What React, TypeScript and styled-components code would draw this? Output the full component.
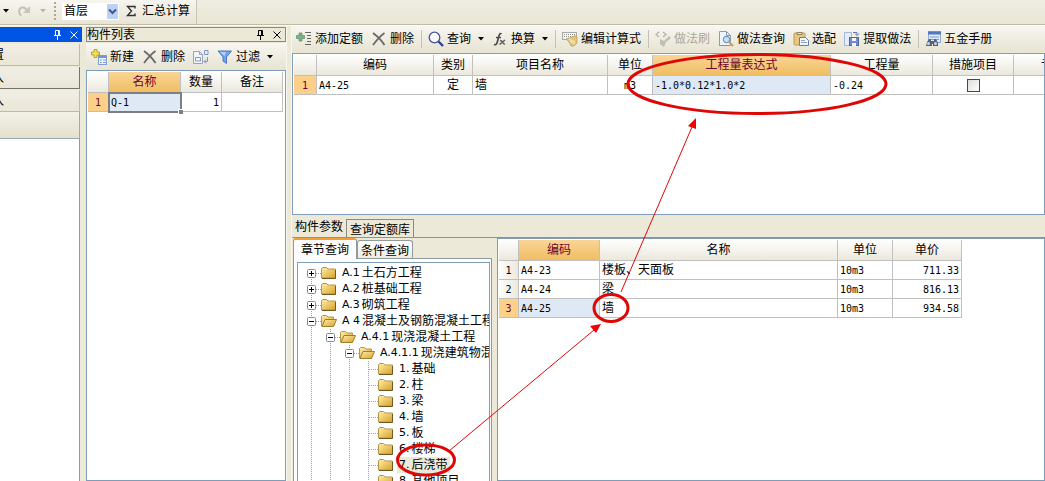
import React from "react";
import styled, { createGlobalStyle, css } from "styled-components";

const GlobalStyle = createGlobalStyle`
  * { box-sizing: border-box; }
  html, body, #root { height: 100%; margin: 0; }
  body {
    overflow: hidden;
    background: #ece9d8;
    color: #000;
    font: 12px/16px "Liberation Sans", "Noto Sans CJK SC", sans-serif;
  }
  button, select, input { font: inherit; color: inherit; margin: 0; }
  svg { flex: none; }
`;

const Window = styled.div`
  position: relative;
  display: flex;
  flex-direction: column;
  height: 100vh;
  overflow: hidden;
`;

const TopBar = styled.header`
  flex: none;
  height: 25px;
  display: flex;
  background: linear-gradient(#efede2, #e9e6d5);
  border-bottom: 1px solid #bfbba8;
`;

const TopTools = styled.div`
  width: 197px;
  display: flex;
  align-items: center;
  padding: 0 6px 2px 3px;
  border-right: 1px solid #c9c6b8;
  background: linear-gradient(#f6f5ef, #e8e5d5);
`;

const TopIcons = styled.div`
  display: flex;
  align-items: center;
  gap: 9px;
`;

const Grip = styled.span`
  width: 2px;
  height: 18px;
  margin: 0 6px 0 8px;
  background: repeating-linear-gradient(#aaa79a 0 2px, transparent 2px 4px);
`;

const IconButton = styled.button`
  display: flex;
  align-items: center;
  padding: 0;
  border: 0;
  background: none;
`;

const FloorPicker = styled.label`
  position: relative;
  width: 57px;
  height: 17px;
  margin-right: 7px;
  display: flex;
  background: #fff;
  select {
    width: 100%;
    height: 17px;
    padding: 0 14px 0 2px;
    border: 0;
    appearance: none;
    background: none;
    line-height: 16px;
  }
  svg { position: absolute; right: 1px; top: 1px; pointer-events: none; }
`;

const Sum = styled.button`
  display: flex;
  align-items: center;
  gap: 6px;
  padding: 0;
  border: 0;
  background: none;
  white-space: nowrap;
`;

const Workspace = styled.div`
  flex: 1;
  min-height: 0;
  display: flex;
  border-top: 1px solid #fbfaf3;
`;

const NavPane = styled.aside`
  flex: none;
  width: 82px;
  padding-top: 1px;
  display: flex;
  flex-direction: column;
`;

const TitleBar = styled.div<{ $active?: boolean }>`
  flex: none;
  height: 15px;
  display: flex;
  align-items: center;
  justify-content: flex-end;
  gap: 8px;
  padding-right: 4px;
  line-height: 14px;
  ${(p) =>
    p.$active
      ? css`background: #0054e3; color: #fff; margin-bottom: 1px;`
      : css`border: 1px solid #8c8a7e; color: #000;`}
  h2 { flex: 1; margin: 0; font-size: 12px; font-weight: 400; }
`;

const NavButton = styled.button<{ $pressed?: boolean }>`
  flex: none;
  height: 22px;
  width: 80px;
  margin-top: 1px;
  padding: 1px 75px 0 0;
  display: flex;
  justify-content: flex-end;
  align-items: center;
  overflow: hidden;
  white-space: nowrap;
  background: linear-gradient(#f1efe5, #e9e6d6);
  border: 0;
  border-right: 1px solid ${(p) => (p.$pressed ? "#77756b" : "#bdbaab")};
  border-bottom: 1px solid ${(p) => (p.$pressed ? "#77756b" : "#bdbaab")};
`;

const NavStrip = styled.div`
  flex: none;
  height: 27px;
  width: 80px;
  background: linear-gradient(#f4f2e8, #e4e0cc);
  border-right: 1px solid #aca899;
  border-bottom: 1px solid #9aa7ae;
`;

const NavBody = styled.div`
  flex: 1;
  width: 80px;
  background: #fff;
  border-right: 1px solid #7f9db9;
`;

const ListPane = styled.section`
  flex: none;
  width: 201px;
  margin: 0 4px;
  padding-top: 1px;
  display: flex;
  flex-direction: column;
  border-right: 1px solid #f8f7f0;
`;

const Toolbar = styled.div<{ $inset?: boolean }>`
  flex: none;
  height: ${(p) => (p.$inset ? "27px" : "26px")};
  margin: ${(p) => (p.$inset ? "1px 0 0" : "0 0 1px")};
  padding-left: ${(p) => (p.$inset ? "1px" : "0")};
  display: flex;
  align-items: center;
  overflow: hidden;
  background: linear-gradient(#f7f6f0, #e7e4d3);
`;

const ToolButton = styled.button`
  flex: none;
  display: flex;
  align-items: center;
  gap: 3px;
  padding: 0 4px;
  border: 0;
  background: none;
  white-space: nowrap;
  &:disabled { color: #aca899; }
`;

const Divider = styled.span`
  flex: none;
  width: 1px;
  height: 18px;
  margin: 0 2px 0 3px;
  background: #c5c2b4;
`;

const ArrowSlot = styled.span`
  display: flex;
  padding-left: 4px;
`;

const GridFrame = styled.div`
  flex: 1;
  min-width: 0;
  overflow: hidden;
  background: #fff;
  border: 1px solid #7f9db9;
  padding: 1px 0 0 1px;
`;

const Grid = styled.table`
  table-layout: fixed;
  width: 0;
  border-collapse: separate;
  border-spacing: 0;
`;

const HeadCell = styled.th<{ $on?: boolean }>`
  height: 21px;
  padding: 0;
  overflow: hidden;
  white-space: nowrap;
  font-weight: 400;
  text-align: center;
  line-height: 16px;
  border-right: 1px solid #c0c0c0;
  border-bottom: 1px solid #c0c0c0;
  color: ${(p) => (p.$on ? "#700030" : "#000")};
  background: ${(p) =>
    p.$on ? "linear-gradient(#f9d596, #f0be62)" : "linear-gradient(#fefefd, #ebe8dc)"};
`;

const Cell = styled.td<{ $align?: string; $fill?: boolean; $focus?: boolean }>`
  position: relative;
  height: 19px;
  padding: 0 2px;
  overflow: ${(p) => (p.$focus ? "visible" : "hidden")};
  white-space: nowrap;
  text-align: ${(p) => p.$align || "left"};
  line-height: 16px;
  border-right: 1px solid #c0c0c0;
  border-bottom: 1px solid #c0c0c0;
  background: ${(p) => (p.$fill ? "#dfe8f5" : "#fff")};
  ${(p) => p.$focus && css`z-index: 1; outline: 2px solid #7b7f84; outline-offset: -1px;`}
`;

const RowHead = styled(Cell).attrs({ as: "th" })<{ $on?: boolean }>`
  text-align: center;
  font-weight: 400;
  color: ${(p) => (p.$on ? "#700030" : "#000")};
  background: ${(p) => (p.$on ? "#fdd08a" : "linear-gradient(90deg, #fdfdfb, #ece9dd)")};
`;

const Mono = styled.span`
  font: 10px/16px "DejaVu Sans Mono", monospace;
`;

const FillHandle = styled.span`
  position: absolute;
  right: -3px;
  bottom: -3px;
  width: 5px;
  height: 5px;
  background: #7b7f84;
  border: 1px solid #fff;
  border-width: 1px 0 0 1px;
`;

const Check = styled.input`
  appearance: none;
  display: block;
  width: 13px;
  height: 13px;
  margin: 0 auto !important;
  border: 1px solid #1c5180;
  background: linear-gradient(135deg, #dcdcd7, #fff);
`;

const Main = styled.main`
  flex: 1;
  min-width: 0;
  display: flex;
  flex-direction: column;
  border-left: 1px solid #f8f7f0;
`;

const Upper = styled.div`
  flex: 0 0 35%;
  min-height: 162px;
  display: flex;
`;

const OuterTabs = styled.div`
  flex: none;
  display: flex;
  align-items: flex-end;
  height: 23px;
  border-bottom: 1px solid #8a949c;
`;

const OuterTab = styled.button<{ $on?: boolean }>`
  height: ${(p) => (p.$on ? "22px" : "18px")};
  padding: 2px 3px 0;
  white-space: nowrap;
  background: none;
  border: 1px solid #8c8a7e;
  border-width: ${(p) => (p.$on ? "0" : "1px 1px 0")};
`;

const Lower = styled.div`
  flex: 1;
  min-height: 0;
  display: flex;
  gap: 5px;
`;

const QueryPane = styled.div`
  flex: none;
  width: 200px;
  padding-left: 1px;
  display: flex;
  flex-direction: column;
`;

const InnerTabs = styled.div`
  flex: none;
  height: 20px;
  display: flex;
  align-items: flex-end;
`;

const InnerTab = styled.button<{ $on?: boolean }>`
  position: relative;
  white-space: nowrap;
  border: 1px solid #919b9c;
  border-bottom: 0;
  border-radius: 3px 3px 0 0;
  ${(p) =>
    p.$on
      ? css`
          height: 21px;
          width: 64px;
          padding: 0;
          margin-bottom: -1px;
          z-index: 1;
          background: #fcfcfe;
          border-top: 2px solid #f0a030;
        `
      : css`
          height: 18px;
          width: 56px;
          padding: 2px 0 0;
          background: linear-gradient(#fff, #ecebe5);
        `}
`;

const TabPage = styled.div`
  flex: 1;
  min-height: 0;
  display: flex;
  padding: 3px 1px 0 3px;
  background: #fcfcfe;
  border: 1px solid #919b9c;
  border-bottom: 0;
`;

const Tree = styled.ul`
  flex: 1;
  min-width: 0;
  margin: 0;
  padding: 2px 0 0 4px;
  list-style: none;
  overflow: hidden;
  background: #fff;
  border: 1px solid #7f9db9;
  border-bottom: 0;
`;

const TreeRow = styled.li`
  display: flex;
  align-items: center;
  height: 16px;
  white-space: nowrap;
`;

const TreeLabel = styled.span<{ $on?: boolean }>`
  display: flex;
  height: 16px;
  padding: 0 2px;
  margin-left: 3px;
  background: ${(p) => (p.$on ? "#ece9d8" : "none")};
`;

const TreeCode = styled.span`
  font: 11px/16px "DejaVu Sans", sans-serif;
  white-space: pre;
  margin-right: 2px;
`;

const Marks = styled.svg`
  position: absolute;
  left: 0;
  top: 0;
  z-index: 2;
  pointer-events: none;
`;

const Svg = ({ children, w = 16, h = 16 }: { children: React.ReactNode; w?: number; h?: number }) => (
  <svg width={w} height={h} viewBox={`0 0 ${w} ${h}`} fill="none" aria-hidden="true">
    {children}
  </svg>
);

const Down = ({ color = "#000" }: { color?: string }) => (
  <Svg w={6} h={4}><path d="M0 0h6L3 3.5z" fill={color} /></Svg>
);
const Pin = () => (
  <Svg w={9} h={10}>
    <path d="M2.5 5V.5h4V5M5.5 1v4M1 5.5h7M4.5 6v4" stroke="currentColor" />
  </Svg>
);
const Close = () => (
  <Svg w={8} h={8}><path d="M.5.5l7 7M7.5.5l-7 7" stroke="currentColor" /></Svg>
);
const Redo = () => (
  <Svg w={13} h={14}>
    <path d="M3 12C0 8 1 4 4 3.500 7 3 8 5 8 6.500" stroke="#c4c2b7" strokeWidth="2" />
    <path d="M12 2v7H5z" fill="#c8c6bb" />
  </Svg>
);
const Chevron = () => (
  <Svg w={11} h={15}>
    <rect width="11" height="15" rx="1" fill="#bdd0f6" />
    <path d="M2 5.500l3.500 3.500L9 5.500" stroke="#435a86" strokeWidth="2" />
  </Svg>
);
const SumIcon = () => (
  <Svg w={10} h={12}>
    <path d="M9 3.500V1.500H1.500L5.500 6 1.500 10.500H9V8.500" stroke="#303030" strokeWidth="1.400" />
  </Svg>
);
const NewIcon = () => (
  <Svg>
    <path d="M3 .5h3V3h2.500v3H6v2.500H3V6H.5V3H3z" fill="#f3df55" stroke="#a2923a" strokeWidth=".8" />
    <rect x="7.500" y="6.500" width="8" height="9" fill="#eef5ff" stroke="#819dce" />
    <path d="M8 8h7" stroke="#6f94da" strokeWidth="2" />
    <path d="M9 11h2m1 0h3M9 13.500h2m1 0h3" stroke="#7c9bc9" />
  </Svg>
);
const DeleteIcon = () => (
  <Svg>
    <path d="M2 2C6 5 11 10 13.500 14M13.500 2C9 5 5 10 2 14" stroke="#686868" strokeWidth="1.800" />
  </Svg>
);
const CopyIcon = () => (
  <Svg>
    <path d="M.5 2.500h6l3 3v9h-9z" fill="#f1f4fa" stroke="#97a3b8" />
    <path d="M2.500 8.500h5v3.500h-5z" stroke="#8b9cbc" />
    <path d="M6.500 2.500v3h3" stroke="#97a3b8" />
    <path d="M11.500 1.500h3.500v4h-3.500zM14.500 8v4.500h-3M13 10.500l-2 2 2 2" stroke="#7797ce" />
  </Svg>
);
const FilterIcon = () => (
  <Svg>
    <path d="M1 2h13.500L9.500 8v6.500L6 12V8z" fill="#72a2e8" stroke="#4d77c9" />
    <path d="M3 3h6L7.500 7z" fill="#b3d1fa" />
  </Svg>
);
const AddIcon = () => (
  <Svg>
    <path d="M3 2h3v2.500h2.500v3H6V10H3V7.500H.5v-3H3z" fill="#7db088" stroke="#5b8f6d" strokeWidth=".7" />
    <path d="M9 1.500h6M11 4.500h4M11 7.500h4M11 10.500h4M9 13.500h6" stroke="#676767" />
  </Svg>
);
const SearchIcon = () => (
  <Svg>
    <circle cx="6.500" cy="6.500" r="5.300" fill="#f5f8ff" stroke="#4b5296" strokeWidth="1.300" />
    <path d="M10.500 10.500l4.500 4.500" stroke="#343f91" strokeWidth="2.400" />
  </Svg>
);
const FxIcon = () => (
  <Svg>
    <path d="M9.500 3C7.500 1.500 7 4.500 6 8.500S4.500 14.500 2 13.500M4 6.500h5" stroke="#4d4d4d" strokeWidth="1.700" />
    <path d="M8 9.500c3-.5 2 4 5 3.500M13 9L7.500 13.500" stroke="#5d5d5d" strokeWidth="1.500" />
  </Svg>
);
const EditCalcIcon = () => (
  <Svg>
    <rect x=".5" y="1.500" width="14" height="7" fill="#f5f5f3" stroke="#a9aaa8" />
    <path d="M2 3.500h11M2 5.500h11" stroke="#8e9391" strokeDasharray="1 1" />
    <path d="M4 8l5-1.500 4-2 2 1.500v6l-3 3H9L7 11z" fill="#e2c57c" stroke="#b39a5c" strokeWidth=".7" />
    <path d="M8 10l5 3M7 8l6 3" stroke="#fff0c0" />
  </Svg>
);
const BrushIcon = () => (
  <Svg>
    <path d="M4 1L1 3.500 4 6M8 1l3 2.500L8 6" stroke="#b4b3aa" strokeWidth="1.300" />
    <path d="M5 8l4 2 5-5 2 2-5 4-2 5-4-3z" fill="#c0beb4" />
  </Svg>
);
const DocSearchIcon = () => (
  <Svg>
    <path d="M1.500.5h7l4 4v10h-11z" fill="#edf4fc" stroke="#83a1c5" />
    <path d="M8.500.5v4h4M1 14.500h11" stroke="#7896bd" />
    <circle cx="8.500" cy="8.500" r="3.200" fill="#c7e2f5" stroke="#627f9d" />
    <path d="M11 11l4 4" stroke="#d39859" strokeWidth="2" />
  </Svg>
);
const PasteIcon = () => (
  <Svg>
    <rect x="1" y="2" width="11" height="12" rx="1" fill="#e8c97a" stroke="#b79b5c" />
    <path d="M4 3.500V1.500h5v2z" fill="#f1e9c8" stroke="#8d8163" />
    <path d="M6.500 6.500h6l3 3v5h-9z" fill="#f1f6fc" stroke="#6a7f9e" />
    <path d="M8 9.500h4M8 11.500h6" stroke="#8aa4c5" />
  </Svg>
);
const ExtractIcon = () => (
  <Svg>
    <path d="M.5 1.500h7v13h-7z" fill="#e5edfb" stroke="#a3b6db" />
    <rect x="5.500" y="6.500" width="9" height="8" fill="#718bc9" stroke="#5166a4" />
    <path d="M8 7h4v3H8zM8 12h4v3H8z" fill="#f4f6fd" />
    <path d="M9 1.500h4v3M11 2.500L13 4.500 15 2.500" stroke="#687bad" />
  </Svg>
);
const ManualIcon = () => (
  <Svg>
    <rect x="3.500" y=".5" width="12" height="11" fill="#dceafe" stroke="#8cabd7" />
    <path d="M3 2h13" stroke="#5279be" strokeWidth="3" />
    <path d="M5 6h9M5 8.500h9" stroke="#7d9fcf" />
    <path d="M2 11l2-3h2v2h3V8h2l2 4v3H8v-2H7v2H1z" fill="#556579" />
    <circle cx="3.500" cy="12.500" r="1.500" fill="#c4dbe7" />
    <circle cx="10.500" cy="12.500" r="1.500" fill="#c4dbe7" />
  </Svg>
);
const Folder = ({ open }: { open?: boolean }) => (
  <Svg>
    <defs>
      <linearGradient id="folder" x2="1" y2="1">
        <stop stopColor="#fff0ad" />
        <stop offset="1" stopColor="#d9a126" />
      </linearGradient>
    </defs>
    <path
      d={open ? "M.5 13V3.500l1-1h4l1.500 1.500h5.500v9z" : "M.5 13V4l1-1.500h4L7 4h7.500v9z"}
      fill="url(#folder)"
      stroke="#b3974b"
    />
    {open && <path d="M1 13.500L4 6.500h11.500l-3 7z" fill="url(#folder)" stroke="#9e7d2d" />}
    {!open && <path d="M1 13.500h13.500V5" stroke="#6f5a23" />}
  </Svg>
);
const Guide = ({ tick, box, first }: { tick?: boolean; box?: "+" | "-"; first?: boolean }) => (
  <Svg w={19}>
    <path d={first ? "M9.500 8v8" : "M9.500 0v16"} stroke="#a09f98" strokeDasharray="1 1" />
    {(tick || box) && <path d="M10 8.500h9" stroke="#a09f98" strokeDasharray="1 1" />}
    {box && (
      <>
        <rect x="5.500" y="4.500" width="8" height="8" rx="1" fill="#fff" stroke="#7b8a9c" />
        <path d={box === "+" ? "M7 8.500h5M9.500 6v5" : "M7 8.500h5"} stroke="#000" />
      </>
    )}
  </Svg>
);

type Node = { level: number; code: string; name: string; state?: "+" | "-"; on?: boolean };
const nodes: Node[] = [
  { level: 0, code: "A.1", name: "土石方工程", state: "+" },
  { level: 0, code: "A.2", name: "桩基础工程", state: "+" },
  { level: 0, code: "A.3", name: "砌筑工程", state: "+" },
  { level: 0, code: "A 4", name: "混凝土及钢筋混凝土工程", state: "-" },
  { level: 1, code: "A.4.1", name: "现浇混凝土工程", state: "-" },
  { level: 2, code: "A.4.1.1", name: "现浇建筑物混凝土", state: "-" },
  { level: 3, code: "1.", name: "基础" },
  { level: 3, code: "2.", name: "柱" },
  { level: 3, code: "3.", name: "梁" },
  { level: 3, code: "4.", name: "墙" },
  { level: 3, code: "5.", name: "板" },
  { level: 3, code: "6.", name: "楼梯" },
  { level: 3, code: "7.", name: "后浇带", on: true },
  { level: 3, code: "8.", name: "其他项目" },
];

const prices = [
  ["A4-23", "楼板、天面板", "10m3", "711.33"],
  ["A4-24", "梁", "10m3", "816.13"],
  ["A4-25", "墙", "10m3", "934.58"],
];

const Columns = ({ widths }: { widths: number[] }) => (
  <colgroup>
    {widths.map((w, i) => (
      <col key={i} style={{ width: w }} />
    ))}
  </colgroup>
);

const Tool = ({ icon, label, menu, disabled }: {
  icon: React.ReactNode; label?: string; menu?: boolean; disabled?: boolean;
}) => (
  <ToolButton type="button" disabled={disabled} aria-label={label || "复制"}>
    {icon}
    {label}
    {menu && <ArrowSlot><Down /></ArrowSlot>}
  </ToolButton>
);

export default function App() {
  return (
    <Window>
      <GlobalStyle />
      <TopBar>
        <TopTools>
          <TopIcons>
            <IconButton type="button" aria-label="撤销列表"><Down /></IconButton>
            <IconButton type="button" aria-label="恢复"><Redo /></IconButton>
            <IconButton type="button" aria-label="恢复列表"><Down color="#b9b7ac" /></IconButton>
          </TopIcons>
          <Grip />
          <FloorPicker>
            <select aria-label="楼层" defaultValue="首层"><option>首层</option></select>
            <Chevron />
          </FloorPicker>
          <Sum type="button"><SumIcon />汇总计算</Sum>
        </TopTools>
      </TopBar>

      <Workspace>
        <NavPane>
          <TitleBar $active>
            <IconButton type="button" aria-label="固定"><Pin /></IconButton>
            <IconButton type="button" aria-label="关闭"><Close /></IconButton>
          </TitleBar>
          <NavButton type="button">设置</NavButton>
          <NavButton type="button" $pressed>输入</NavButton>
          <NavButton type="button">输入</NavButton>
          <NavStrip />
          <NavBody />
        </NavPane>

        <ListPane>
          <TitleBar>
            <h2>构件列表</h2>
            <IconButton type="button" aria-label="固定"><Pin /></IconButton>
            <IconButton type="button" aria-label="关闭"><Close /></IconButton>
          </TitleBar>
          <Toolbar $inset>
            <Tool icon={<NewIcon />} label="新建" />
            <Tool icon={<DeleteIcon />} label="删除" />
            <Tool icon={<CopyIcon />} />
            <Tool icon={<FilterIcon />} label="过滤" menu />
          </Toolbar>
          <GridFrame>
            <Grid>
              <Columns widths={[21, 72, 41, 61]} />
              <thead>
                <tr>
                  <HeadCell />
                  <HeadCell $on>名称</HeadCell>
                  <HeadCell>数量</HeadCell>
                  <HeadCell>备注</HeadCell>
                </tr>
              </thead>
              <tbody>
                <tr>
                  <RowHead $on><Mono>1</Mono></RowHead>
                  <Cell $fill $focus><Mono>Q-1</Mono><FillHandle /></Cell>
                  <Cell $align="right"><Mono>1</Mono></Cell>
                  <Cell />
                </tr>
              </tbody>
            </Grid>
          </GridFrame>
        </ListPane>

        <Main>
          <Toolbar>
            <Tool icon={<AddIcon />} label="添加定额" />
            <Tool icon={<DeleteIcon />} label="删除" />
            <Divider />
            <Tool icon={<SearchIcon />} label="查询" menu />
            <Tool icon={<FxIcon />} label="换算" menu />
            <Divider />
            <Tool icon={<EditCalcIcon />} label="编辑计算式" />
            <Divider />
            <Tool icon={<BrushIcon />} label="做法刷" disabled />
            <Tool icon={<DocSearchIcon />} label="做法查询" />
            <Tool icon={<PasteIcon />} label="选配" />
            <Tool icon={<ExtractIcon />} label="提取做法" />
            <Divider />
            <Tool icon={<ManualIcon />} label="五金手册" />
          </Toolbar>
          <Upper>
            <GridFrame>
              <Grid>
                <Columns widths={[23, 117, 39, 135, 45, 178, 102, 81, 79]} />
                <thead>
                  <tr>
                    <HeadCell />
                    <HeadCell>编码</HeadCell>
                    <HeadCell>类别</HeadCell>
                    <HeadCell>项目名称</HeadCell>
                    <HeadCell>单位</HeadCell>
                    <HeadCell $on>工程量表达式</HeadCell>
                    <HeadCell>工程量</HeadCell>
                    <HeadCell>措施项目</HeadCell>
                    <HeadCell>专业</HeadCell>
                  </tr>
                </thead>
                <tbody>
                  <tr>
                    <RowHead $on><Mono>1</Mono></RowHead>
                    <Cell><Mono>A4-25</Mono></Cell>
                    <Cell $align="center">定</Cell>
                    <Cell>墙</Cell>
                    <Cell $align="center"><Mono>m3</Mono></Cell>
                    <Cell $fill><Mono>-1.0*0.12*1.0*2</Mono></Cell>
                    <Cell><Mono>-0.24</Mono></Cell>
                    <Cell><Check type="checkbox" aria-label="措施项目" /></Cell>
                    <Cell />
                  </tr>
                </tbody>
              </Grid>
            </GridFrame>
          </Upper>

          <OuterTabs>
            <OuterTab type="button" $on>构件参数</OuterTab>
            <OuterTab type="button">查询定额库</OuterTab>
          </OuterTabs>

          <Lower>
            <QueryPane>
              <InnerTabs>
                <InnerTab type="button" $on>章节查询</InnerTab>
                <InnerTab type="button">条件查询</InnerTab>
              </InnerTabs>
              <TabPage>
                <Tree>
                  {nodes.map((n, i) => (
                    <TreeRow key={i}>
                      {Array.from({ length: n.level }, (_, k) => <Guide key={k} />)}
                      <Guide tick box={n.state} first={i === 0} />
                      <Folder open={n.state === "-"} />
                      <TreeLabel $on={n.on}>
                        <TreeCode>{n.code}</TreeCode>
                        {n.name}
                      </TreeLabel>
                    </TreeRow>
                  ))}
                </Tree>
              </TabPage>
            </QueryPane>
            <GridFrame>
              <Grid>
                <Columns widths={[20, 81, 238, 55, 69]} />
                <thead>
                  <tr>
                    <HeadCell />
                    <HeadCell $on>编码</HeadCell>
                    <HeadCell>名称</HeadCell>
                    <HeadCell>单位</HeadCell>
                    <HeadCell>单价</HeadCell>
                  </tr>
                </thead>
                <tbody>
                  {prices.map(([code, name, unit, price], i) => (
                    <tr key={code}>
                      <RowHead $on={i === 2}><Mono>{i + 1}</Mono></RowHead>
                      <Cell $fill={i === 2}><Mono>{code}</Mono></Cell>
                      <Cell>{name}</Cell>
                      <Cell><Mono>{unit}</Mono></Cell>
                      <Cell $align="right"><Mono>{price}</Mono></Cell>
                    </tr>
                  ))}
                </tbody>
              </Grid>
            </GridFrame>
          </Lower>
        </Main>
      </Workspace>

      <Marks width="1045" height="481" fill="none" stroke="#dd0806" aria-hidden="true">
        <ellipse cx="757" cy="84" rx="129" ry="29.500" strokeWidth="3" />
        <ellipse cx="611" cy="308" rx="17" ry="13.500" strokeWidth="3" />
        <ellipse cx="426" cy="460" rx="28.500" ry="15" strokeWidth="3" />
        <path d="M449 451L594 330M621 292L692 127" />
        <path d="M601 324l-5 9-6-7zM696 118l0 11-8-3z" fill="#f00000" stroke="none" />
      </Marks>
    </Window>
  );
}
